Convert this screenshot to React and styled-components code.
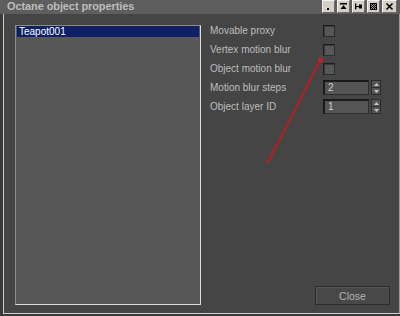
import React from "react";
import styled, { createGlobalStyle } from "styled-components";

const Global = createGlobalStyle`
  html, body { margin: 0; padding: 0; background: #3a3a3a; }
  body { width: 400px; height: 316px; overflow: hidden; }
  * { box-sizing: border-box; }
`;

const Screen = styled.div`
  position: relative;
  width: 400px;
  height: 316px;
  display: flex;
  flex-direction: column;
  background: #3a3a3a;
  font-family: "Liberation Sans", Arial, sans-serif;
`;

const TitleBar = styled.div`
  height: 14px;
  flex: none;
  display: flex;
  align-items: flex-start;
  background: #5e5e5e;
  padding-left: 7px;
  padding-right: 3px;
`;

const Title = styled.div`
  font-size: 11px;
  font-weight: bold;
  line-height: 13px;
  color: #bdbdbd;
  letter-spacing: -0.1px;
`;

const TitleButtons = styled.div`
  margin-left: auto;
  display: flex;
  gap: 2px;
`;

const TitleButton = styled.div`
  width: ${(p) => p.$w || 13}px;
  height: 13px;
  background: #d4d0c8;
  border-top: 1px solid #f4f2ee;
  border-left: 1px solid #f4f2ee;
  border-right: 1px solid #6e6c68;
  border-bottom: 1px solid #6e6c68;
  display: flex;
  align-items: center;
  justify-content: center;
`;

const Frame = styled.div`
  flex: 1;
  display: flex;
  padding-left: 3px;
  padding-bottom: 2px;
`;

const Window = styled.div`
  flex: 1;
  display: flex;
  background: #454545;
  border-left: 1px solid #cfcfcf;
  border-bottom: 1px solid #cfcfcf;
  border-right: 1px solid #9a9a9a;
  padding: 7px 0 8px 11px;
`;

const ListBox = styled.div`
  width: 186px;
  margin-top: 4px;
  background: #585858;
  border-top: 1px solid #8c8c8c;
  border-left: 1px solid #8c8c8c;
  border-right: 1px solid #dcdcdc;
  border-bottom: 1px solid #dcdcdc;
  padding: 0 1px;
`;

const ListItem = styled.div`
  height: 11px;
  line-height: 11px;
  font-size: 10px;
  padding-left: 2px;
  color: ${(p) => (p.$selected ? "#ffffff" : "#cccccc")};
  background: ${(p) => (p.$selected ? "#0d2164" : "transparent")};
`;

const Panel = styled.div`
  flex: 1;
  display: flex;
  flex-direction: column;
  margin-left: 9px;
  padding-right: 9px;
`;

const Row = styled.div`
  height: 19px;
  display: flex;
  align-items: center;
`;

const Label = styled.div`
  width: 113px;
  font-size: 10px;
  color: #bdbdbd;
`;

const Check = styled.div`
  width: 12px;
  height: 12px;
  background: #575757;
  border-top: 1px solid #1c1c1c;
  border-left: 1px solid #1c1c1c;
  border-right: 1px solid #2c2c2c;
  border-bottom: 1px solid #2c2c2c;
  box-shadow: inset 1px 1px 0 #3a3a3a;
`;

const Field = styled.div`
  width: 46px;
  height: 15px;
  background: #555555;
  border-top: 2px solid #1a1a1a;
  border-left: 2px solid #1a1a1a;
  border-right: 1px solid #2e2e2e;
  border-bottom: 1px solid #2e2e2e;
  font-size: 10px;
  line-height: 12px;
  color: #cfcfcf;
  padding-left: 3px;
`;

const Spinner = styled.div`
  width: 10px;
  height: 15px;
  margin-left: 2px;
  display: flex;
  flex-direction: column;
  background: #4a4a4a;
  border: 1px solid #2a2a2a;
`;

const SpinHalf = styled.div`
  flex: 1;
  display: flex;
  align-items: center;
  justify-content: center;
  background: #555555;
  & + & { border-top: 1px solid #333; }
`;

const Footer = styled.div`
  margin-top: auto;
  display: flex;
  justify-content: flex-end;
`;

const Button = styled.div`
  width: 75px;
  height: 19px;
  background: #484848;
  border: 1px solid #2a2a2a;
  box-shadow: inset 1px 1px 0 #555;
  color: #b4b4b4;
  font-size: 10.5px;
  display: flex;
  align-items: center;
  justify-content: center;
`;

const Overlay = styled.svg`
  position: absolute;
  left: 0;
  top: 0;
  pointer-events: none;
`;

function Up() {
  return (
    <svg width="5" height="3" viewBox="0 0 5 3">
      <path d="M2.5 0 L5 3 L0 3 Z" fill="#c8c8c8" />
    </svg>
  );
}
function Down() {
  return (
    <svg width="5" height="3" viewBox="0 0 5 3">
      <path d="M0 0 L5 0 L2.5 3 Z" fill="#c8c8c8" />
    </svg>
  );
}

function Spin({ value }) {
  return (
    <>
      <Field>{value}</Field>
      <Spinner>
        <SpinHalf><Up /></SpinHalf>
        <SpinHalf><Down /></SpinHalf>
      </Spinner>
    </>
  );
}

export default function App() {
  return (
    <>
      <Global />
      <Screen>
        <TitleBar>
          <Title>Octane object properties</Title>
          <TitleButtons>
            <TitleButton>
              <svg width="9" height="9" viewBox="0 0 9 9">
                <rect x="3" y="6" width="2" height="2" fill="#000" />
              </svg>
            </TitleButton>
            <TitleButton>
              <svg width="9" height="9" viewBox="0 0 9 9">
                <rect x="1" y="1" width="7" height="1.5" fill="#000" />
                <path d="M1.5 7 L4.5 3 L7.5 7 Z" fill="#000" />
              </svg>
            </TitleButton>
            <TitleButton>
              <svg width="9" height="9" viewBox="0 0 9 9">
                <rect x="1" y="1.5" width="1.3" height="6" fill="#000" />
                <rect x="2" y="4" width="3" height="1.2" fill="#000" />
                <rect x="5" y="2.5" width="3" height="4" fill="#000" />
              </svg>
            </TitleButton>
            <TitleButton>
              <svg width="9" height="9" viewBox="0 0 9 9">
                <rect x="1" y="1" width="7" height="7" fill="#000" />
                <path d="M2 2h1v1H2zM4 2h1v1H4zM6 2h1v1H6zM3 3h1v1H3zM5 3h1v1H5zM2 4h1v1H2zM4 4h1v1H4zM6 4h1v1H6zM3 5h1v1H3zM5 5h1v1H5zM2 6h1v1H2zM4 6h1v1H4zM6 6h1v1H6z" fill="#9a9890" />
              </svg>
            </TitleButton>
            <TitleButton $w={15}>
              <svg width="9" height="9" viewBox="0 0 9 9">
                <path d="M1.5 1.5 L7.5 7.5 M7.5 1.5 L1.5 7.5" stroke="#000" strokeWidth="1.6" />
              </svg>
            </TitleButton>
          </TitleButtons>
        </TitleBar>
        <Frame>
          <Window>
            <ListBox>
              <ListItem $selected>Teapot001</ListItem>
            </ListBox>
            <Panel>
              <Row>
                <Label>Movable proxy</Label>
                <Check />
              </Row>
              <Row>
                <Label>Vertex motion blur</Label>
                <Check />
              </Row>
              <Row>
                <Label>Object motion blur</Label>
                <Check />
              </Row>
              <Row>
                <Label>Motion blur steps</Label>
                <Spin value="2" />
              </Row>
              <Row>
                <Label>Object layer ID</Label>
                <Spin value="1" />
              </Row>
              <Footer>
                <Button>Close</Button>
              </Footer>
            </Panel>
          </Window>
        </Frame>
        <Overlay width="400" height="316" viewBox="0 0 400 316">
          <line x1="268" y1="162" x2="320" y2="61" stroke="#a3242a" strokeWidth="2.6" strokeLinecap="round" />
          <circle cx="320.5" cy="60" r="2.8" fill="#b3262c" />
        </Overlay>
      </Screen>
    </>
  );
}
